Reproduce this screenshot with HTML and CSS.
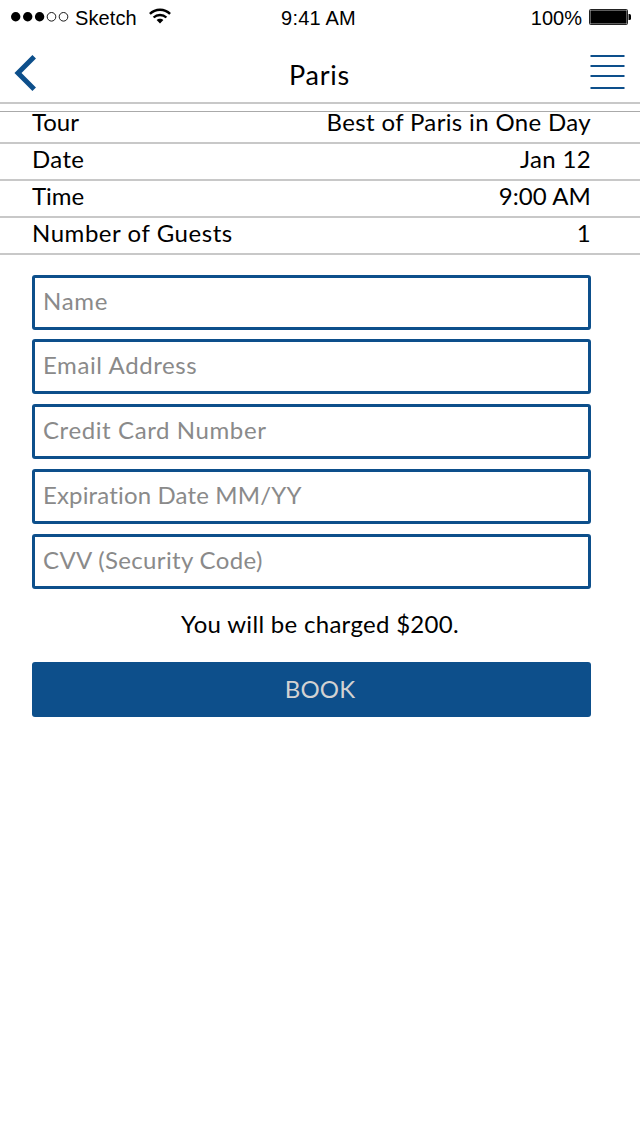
FILE: index.html
```html
<!DOCTYPE html>
<html lang="en">
<head>
<meta charset="utf-8">
<title>Paris</title>
<link rel="stylesheet" href="styles.css">
</head>
<body>
<div class="status">
  <div class="status-left">
    <svg class="signal" width="60" height="12" viewBox="0 0 60 12"><g fill="#000"><circle cx="4.7" cy="5.8" r="4.7"/><circle cx="16.7" cy="5.8" r="4.7"/><circle cx="28.6" cy="5.8" r="4.7"/></g><g fill="none" stroke="#000" stroke-width=".9"><circle cx="40.5" cy="5.8" r="4.3"/><circle cx="52.5" cy="5.8" r="4.3"/></g></svg>
    <span class="carrier">Sketch</span>
    <svg class="wifi" width="22" height="16" viewBox="0 0 22 16"><g fill="none" stroke="#000" stroke-width="2.4"><path d="M.9 5.9C6.4.3 15.6.3 21.1 5.9"/><path d="M4.6 9.5C8.1 6.2 13.9 6.2 17.4 9.5"/></g><path d="M7.6 12.1C9.4 10.3 12.6 10.3 14.4 12.1L11 15.4Z"/></svg>
  </div>
  <span class="time">9:41 AM</span>
  <div class="status-right">
    <span>100%</span>
    <svg class="battery" width="43" height="18" viewBox="0 0 43 18"><rect x=".5" y=".5" width="38" height="15" rx="1" fill="#bbb" stroke="#222"/><rect x="1.5" y="1.5" width="36" height="13"/><path d="M39.5 5h1q1.5 0 1.5 1.5v3q0 1.5-1.5 1.5h-1z"/></svg>
  </div>
</div>
<header class="nav">
  <svg class="back" width="24" height="38" viewBox="0 0 24 38"><path d="M20.2 2.8L4 19L20.2 35.2" fill="none" stroke="#0d4f8b" stroke-width="5"/></svg>
  <h1 class="title">Paris</h1>
  <svg class="menu" width="35" height="35" viewBox="0 0 35 35"><path d="M.5 1h34M.5 11h34M.5 21h34M.5 33h34" stroke="#0d4f8b" stroke-width="2"/></svg>
</header>
<main>
  <dl class="details">
    <div class="row"><dt class="k-tour">Tour</dt><dd class="v-tour">Best of Paris in One Day</dd></div>
    <div class="row"><dt class="k-date">Date</dt><dd class="v-date">Jan 12</dd></div>
    <div class="row"><dt class="k-time">Time</dt><dd class="v-time">9:00 AM</dd></div>
    <div class="row"><dt class="k-guests">Number of Guests</dt><dd class="v-guests">1</dd></div>
  </dl>
  <form class="form">
    <input class="field f-name" placeholder="Name">
    <input class="field f-email" placeholder="Email Address">
    <input class="field f-card" placeholder="Credit Card Number">
    <input class="field f-exp" placeholder="Expiration Date MM/YY">
    <input class="field f-cvv" placeholder="CVV (Security Code)">
    <p class="charge"><span>You will be charged $200.</span></p>
    <button class="book" type="button">BOOK</button>
  </form>
</main>
</body>
</html>
```
FILE: styles.css
```css
* { box-sizing: border-box; }
body {
  margin: 0;
  height: 1134px;
  background: #fff;
  color: #000;
  font-family: Lato, sans-serif;
  font-size: 24px;
  overflow: hidden;
}
svg { display: block; flex: none; }
.status {
  display: grid;
  grid-template-columns: 1fr auto 1fr;
  height: 40px;
  padding: 7px 8px 0 11px;
  font: 20px/23px "Liberation Sans", Arial, sans-serif;
}
.status-left, .status-right { display: flex; align-items: flex-start; }
.status-right { justify-content: flex-end; }
.signal { margin-top: 4px; }
.carrier { margin-left: 4px; letter-spacing: .1px; }
.wifi { margin: 1px 0 0 12px; }
.time { margin: 0 5px 0 -1px; letter-spacing: .2px; }
.battery { margin: 2px 0 0 6px; }
.status-right span { margin-right: 1px; }
.nav {
  display: grid;
  grid-template-columns: 1fr auto 1fr;
  height: 64px;
  padding: 14px 15px 0 14px;
  border-bottom: 2px solid #c8c8c8;
}
.title { margin: 5px 0 0; font-size: 27px; font-weight: 400; line-height: 32px; letter-spacing: .8px; }
.menu { justify-self: end; margin-top: 1px; }
.details { margin: 7px 0 0; border-top: 1px solid #aaa; }
.row {
  display: flex;
  justify-content: space-between;
  align-items: flex-end;
  height: 37px;
  padding: 0 49px 6px 32px;
  border-bottom: 2px solid #c8c8c8;
  line-height: 29px;
}
.row:first-child { height: 32px; }
dt, dd { margin: 0; letter-spacing: .35px; white-space: nowrap; }
.k-tour, .k-time { letter-spacing: 0; }
.k-guests { letter-spacing: .55px; }
.v-time { letter-spacing: .1px; }
.form { display: flex; flex-direction: column; width: 559px; margin: 20px 0 0 32px; }
.field {
  height: 55px;
  margin: 0 0 10px;
  padding: 0 8px 4px;
  border: 3px solid #0d4f8b;
  border-radius: 3px;
  background: #fff;
  font: inherit;
  letter-spacing: .4px;
  outline: 0;
}
.f-name { margin-bottom: 9px; letter-spacing: .7px; }
.f-email { letter-spacing: .6px; }
.f-card { letter-spacing: .6px; }
.f-exp { letter-spacing: .15px; }
.f-cvv { letter-spacing: .35px; }
.field::placeholder { color: #8a8a8a; opacity: 1; }
.charge { margin: 10px 0 23px; padding-left: 17px; text-align: center; line-height: 30px; letter-spacing: .3px; }
.book {
  height: 55px;
  padding: 0 0 2px 17px;
  border: 0;
  border-radius: 3px;
  background: #0d4f8b;
  color: #d2d2d2;
  font: inherit;
  letter-spacing: .2px;
}
```
